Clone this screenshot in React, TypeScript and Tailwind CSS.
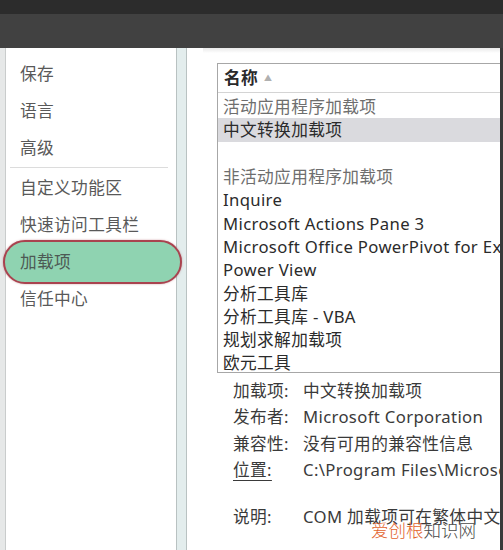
import React from "react";

const font = { fontFamily: '"Noto Sans", "Noto Sans CJK SC", sans-serif' };

type NavItem = { label: string; active?: boolean };

const navTop: NavItem[] = [{ label: "保存" }, { label: "语言" }, { label: "高级" }];
const navBottom: NavItem[] = [
  { label: "自定义功能区" },
  { label: "快速访问工具栏" },
  { label: "加载项", active: true },
  { label: "信任中心" },
];

type Row = { text: string; kind: "group" | "item" | "blank"; selected?: boolean };

const rows: Row[] = [
  { text: "活动应用程序加载项", kind: "group" },
  { text: "中文转换加载项", kind: "item", selected: true },
  { text: "", kind: "blank" },
  { text: "非活动应用程序加载项", kind: "group" },
  { text: "Inquire", kind: "item" },
  { text: "Microsoft Actions Pane 3", kind: "item" },
  { text: "Microsoft Office PowerPivot for Excel 2013", kind: "item" },
  { text: "Power View", kind: "item" },
  { text: "分析工具库", kind: "item" },
  { text: "分析工具库 - VBA", kind: "item" },
  { text: "规划求解加载项", kind: "item" },
  { text: "欧元工具", kind: "item" },
];

const details = [
  { label: "加载项:", value: "中文转换加载项", gap: false },
  { label: "发布者:", value: "Microsoft Corporation", gap: false },
  { label: "兼容性:", value: "没有可用的兼容性信息", gap: false },
  { label: "位置:", value: "C:\\Program Files\\Microsoft Office\\Office15\\ADDINS\\TCSCCONV.DLL", gap: false, underline: true },
  { label: "说明:", value: "COM 加载项可在繁体中文与简体中文之间转换", gap: true },
];

function NavRow({ item }: { item: NavItem }) {
  if (item.active) {
    return (
      <div className="relative z-10 h-[37px] flex items-center -ml-[3px] mr-[-10px]">
        <div className="h-[44px] w-full rounded-full border-2 border-[#a9434f] bg-[#8fd3b1] flex items-center pl-[15px] shadow-[0_0_2px_rgba(160,60,70,0.5)]">
          <span className="text-[#4d5a54]">{item.label}</span>
        </div>
      </div>
    );
  }
  return (
    <div className="h-[37px] flex items-center pl-[14px] text-[#595959]">{item.label}</div>
  );
}

export default function App() {
  return (
    <div
      className="relative w-[503px] h-[550px] overflow-hidden bg-white text-[16.7px] tracking-[0.35px]"
      style={font}
    >
      {/* window chrome */}
      <div className="h-[14px] bg-[#2c2c2c]" />
      <div className="h-[34px] bg-[#414141]" />

      <div className="flex h-[502px]">
        {/* left gutter */}
        <div className="w-[6px] bg-[#e6e8e8] border-r border-[#c9cccc]" />

        {/* category list */}
        <div className="relative z-10 w-[170px] bg-white pt-[7px] pr-[4px]">
          {navTop.map((n) => (
            <NavRow key={n.label} item={n} />
          ))}
          <div className="h-px bg-[#dcdcdc] mx-[4px] my-[1px]" />
          {navBottom.map((n) => (
            <NavRow key={n.label} item={n} />
          ))}
        </div>

        {/* splitter */}
        <div className="w-[11px] bg-[#e3eded] border-x border-[#b9c2c2]" />

        {/* add-in page */}
        <div className="flex-1 min-w-0 overflow-hidden relative">
          <div className="h-[5px] ml-[16px] bg-gradient-to-b from-[#e9e9e9] to-white" />
          <div className="pl-[30px] pt-[10px]">
            <div className="w-[420px] h-[310px] border border-[#a7a7a7] overflow-hidden">
              <div className="h-[29px] border-b border-[#d4d4d4] flex items-center pl-[6px] text-[#2a2a2a] font-semibold">
                名称
                <span className="ml-[6px] text-[8px] text-[#b0b0b0] font-normal">▲</span>
              </div>
              <div className="pt-[2px]">
                {rows.map((r, i) => (
                  <div
                    key={i}
                    className={`h-[23.3px] flex items-center pl-[5px] whitespace-nowrap ${
                      r.selected ? "bg-[#dadade]" : ""
                    } ${r.kind === "group" ? "text-[#6e6e6e]" : "text-[#2b2b2b]"}`}
                  >
                    {r.text}
                  </div>
                ))}
              </div>
            </div>

            {/* selected add-in details */}
            <div className="pl-[16px] pt-[4px] text-[#3a3a3a]">
              {details.map((d) => (
                <div
                  key={d.label}
                  className={`flex items-center h-[26.5px] whitespace-nowrap ${d.gap ? "mt-[20px]" : ""}`}
                >
                  <span className={`w-[70px] shrink-0 ${d.underline ? "underline underline-offset-4" : ""}`}>
                    {d.label}
                  </span>
                  <span>{d.value}</span>
                </div>
              ))}
            </div>
          </div>
        </div>

        {/* right edge */}
        <div className="w-[3px] bg-[#3a3a3a]" />
      </div>

      {/* site watermark */}
      <div
        className="absolute left-[371px] top-[521px] text-[17.5px] leading-none tracking-normal"
        style={{ fontFamily: '"Noto Sans CJK SC", sans-serif', fontWeight: 300 }}
      >
        <span className="text-[#e2632c]">爱创根</span>
        <span className="text-[#4b4b4b]">知识网</span>
      </div>
    </div>
  );
}
